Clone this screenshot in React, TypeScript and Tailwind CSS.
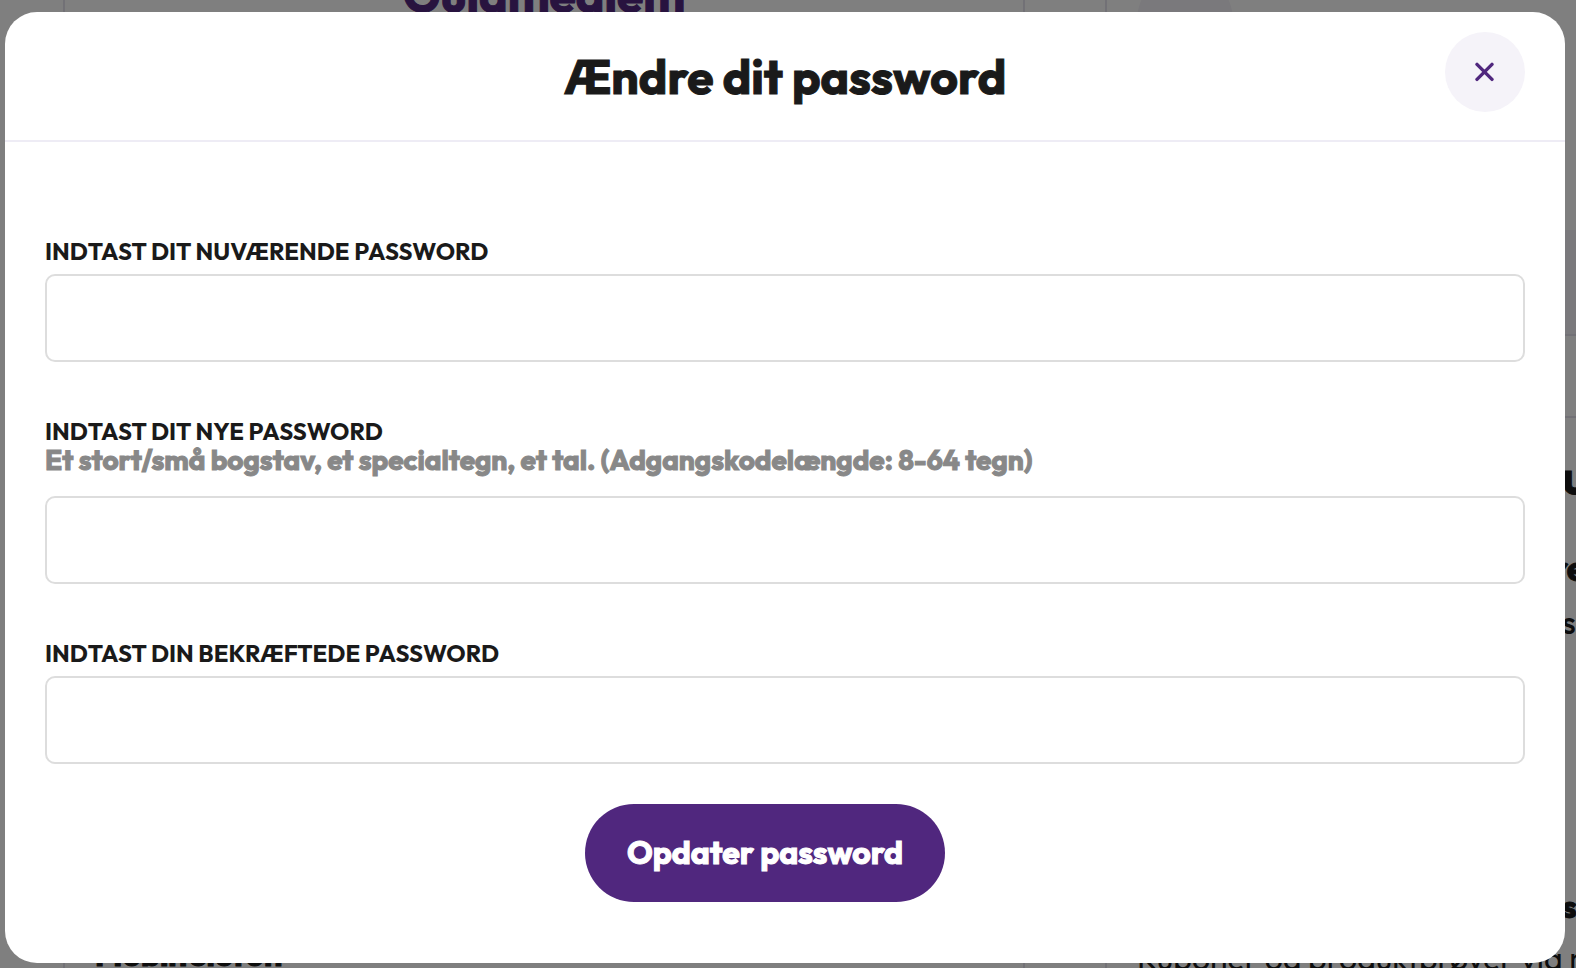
import React from "react";

type FieldProps = { id: string; label: string; hint?: string; autoComplete: string };

function PasswordField({ id, label, hint, autoComplete }: FieldProps) {
  return (
    <div className="flex flex-col">
      <label htmlFor={id} className="text-[24px] leading-7 font-bold text-[#1a1a1a] uppercase">
        {label}
      </label>
      {hint && (
        <p
          id={`${id}-hint`}
          className="mb-3 text-[28px] leading-[30px] font-bold text-[#888888] [-webkit-text-stroke:1px_currentColor]"
        >
          {hint}
        </p>
      )}
      <input
        id={id}
        type="password"
        autoComplete={autoComplete}
        aria-describedby={hint ? `${id}-hint` : undefined}
        className="mt-[9px] h-[88px] w-full rounded-[10px] border-2 border-[#dddddd] bg-white px-6 text-[28px] outline-none focus:border-[#50277e]"
      />
    </div>
  );
}

function AccountPage() {
  return (
    <div aria-hidden="true" className="absolute inset-0 flex overflow-hidden bg-white pl-[63px] text-[#1a1a1a]">
      <section className="flex w-[962px] shrink-0 flex-col justify-between border-x-2 border-[#e4e2ec]">
        <p className="-mt-9 pl-[338px] text-[48px] leading-[60px] font-bold text-[#50277e] [-webkit-text-stroke:1px_currentColor]">
          Guldmedlem
        </p>
        <p className="-mb-1.5 pl-[30px] text-[32px] leading-10 font-bold [-webkit-text-stroke:1px_currentColor]">
          Mobiltelefon
        </p>
      </section>
      <section className="ml-20 flex w-[700px] shrink-0 flex-col border-l-2 border-[#e4e2ec]">
        <div className="-mt-7 ml-[30px] size-24 shrink-0 rounded-full bg-[#f5f3f9]" />
        <div className="mt-[162px] h-[106px] shrink-0 border-b-2 border-[#e4e2ec] bg-[#f5f3f9]" />
        <div className="h-[82px] shrink-0 border-b-2 border-[#e4e2ec]" />
        <div className="flex grow flex-col pl-[455px]">
          <p className="mt-7 text-[48px] leading-[60px] font-bold [-webkit-text-stroke:1px_currentColor]">u</p>
          <p className="mt-8 -ml-2.5 text-[36px] leading-[60px] font-bold [-webkit-text-stroke:1px_currentColor]">re</p>
          <p className="text-[32px] leading-[48px] font-medium">s</p>
          <p className="mt-auto text-[32px] leading-9 font-bold [-webkit-text-stroke:1px_currentColor]">s</p>
        </div>
        <p className="mt-3.5 -mb-2.5 shrink-0 pl-[30px] text-[32px] leading-10 whitespace-nowrap">
          Kuponer og produktprøver via mail
        </p>
      </section>
    </div>
  );
}

export default function App() {
  return (
    <div className="relative min-h-screen font-['Outfit','Lato',sans-serif]">
      <AccountPage />
      <div className="relative min-h-screen bg-black/50 pt-3 pr-[11px] pb-[5px] pl-[5px]">
        <div role="dialog" aria-modal="true" aria-labelledby="dialog-title" className="rounded-[32px] bg-white">
          <header className="grid h-[130px] grid-cols-[80px_1fr_80px] items-center border-b-2 border-[#eeecf5] px-10">
            <h1
              id="dialog-title"
              className="col-start-2 text-center text-[48px] leading-[60px] font-bold text-[#1a1a1a] [-webkit-text-stroke:1px_currentColor]"
            >
              Ændre dit password
            </h1>
            <button
              type="button"
              aria-label="Luk"
              className="mt-5 flex size-20 items-center justify-center self-start rounded-full bg-[#f5f3f9] text-[#50277e]"
            >
              <svg viewBox="0 0 20 20" className="size-5" fill="none" stroke="currentColor" strokeWidth="3.4" strokeLinecap="round">
                <path d="M2 2.4 17 17.4M17 2.4 2 17.4" />
              </svg>
            </button>
          </header>
          <form className="flex flex-col px-10 pt-[95px] pb-[61px]" onSubmit={(e) => e.preventDefault()}>
            <div className="flex flex-col gap-[55px]">
              <PasswordField id="current" label="Indtast dit nuværende password" autoComplete="current-password" />
              <PasswordField
                id="new"
                label="Indtast dit nye password"
                hint="Et stort/små bogstav, et specialtegn, et tal. (Adgangskodelængde: 8-64 tegn)"
                autoComplete="new-password"
              />
              <PasswordField id="confirm" label="Indtast din bekræftede password" autoComplete="new-password" />
            </div>
            <div className="mt-10 flex justify-center pr-10">
              <button
                type="submit"
                className="h-[98px] w-[360px] rounded-full bg-[#50277e] pb-0.5 text-[32px] leading-10 font-bold text-white [-webkit-text-stroke:1px_currentColor]"
              >
                Opdater password
              </button>
            </div>
          </form>
        </div>
      </div>
    </div>
  );
}
